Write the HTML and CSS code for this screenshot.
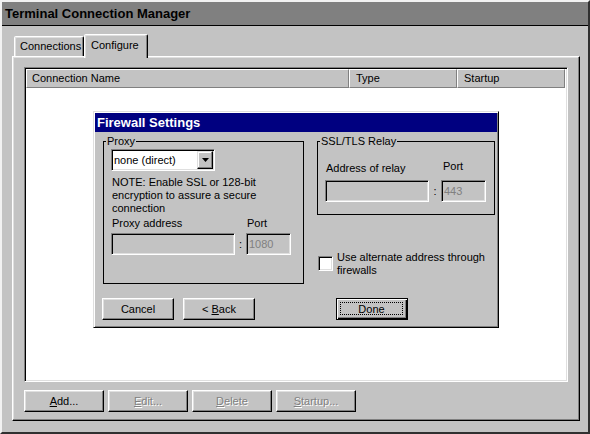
FILE: index.html
```html
<!DOCTYPE html>
<html>
<head>
<meta charset="utf-8">
<title>Terminal Connection Manager</title>
<link rel="stylesheet" href="styles.css">
</head>
<body>
<div class="window">
  <div class="titlebar">Terminal Connection Manager</div>
  <div class="client">
    <div class="tabs">
      <div class="tab tab-conn">Connections</div>
      <div class="tab tab-active">Configure</div>
    </div>
    <div class="panel">
      <div class="listview">
        <div class="lv-header">
          <div class="lv-col col-name">Connection Name</div>
          <div class="lv-col col-type">Type</div>
          <div class="lv-col col-startup">Startup</div>
        </div>
        <div class="lv-body"></div>
      </div>
      <div class="actions">
        <div class="btn btn-main"><span><u>A</u>dd...</span></div>
        <div class="btn btn-main disabled"><span><u>E</u>dit...</span></div>
        <div class="btn btn-main disabled"><span><u>D</u>elete</span></div>
        <div class="btn btn-main disabled"><span><u>S</u>tartup...</span></div>
      </div>
    </div>
  </div>
</div>

<div class="dialog">
  <div class="dlg-title">Firewall Settings</div>
  <div class="dlg-body">
    <div class="group group-proxy">
      <span class="group-label">Proxy</span>
      <div class="combo">
        <span class="combo-text">none (direct)</span>
        <span class="combo-btn"><svg width="7" height="4" viewBox="0 0 7 4"><polygon points="0,0 7,0 3.5,4" fill="#000"/></svg></span>
      </div>
      <p class="note">NOTE: Enable SSL or 128-bit<br>encryption to assure a secure<br>connection</p>
      <div class="fields fields-proxy">
        <span class="field-label">Proxy address</span>
        <span></span>
        <span class="field-label">Port</span>
        <div class="input"></div>
        <span class="colon">:</span>
        <div class="input">1080</div>
      </div>
    </div>
    <div class="right-col">
      <div class="group group-ssl">
        <span class="group-label">SSL/TLS Relay</span>
        <div class="fields fields-ssl">
          <span class="field-label">Address of relay</span>
          <span></span>
          <span class="field-label port-label">Port</span>
          <div class="input"></div>
          <span class="colon">:</span>
          <div class="input">443</div>
        </div>
      </div>
      <div class="check-row">
        <span class="checkbox"></span>
        <span class="check-text">Use alternate address through<br>firewalls</span>
      </div>
    </div>
    <div class="dlg-left">
      <div class="btn dlg-btn"><span>Cancel</span></div>
      <div class="btn dlg-btn"><span>&lt; <u>B</u>ack</span></div>
    </div>
    <div class="dlg-right">
      <div class="btn dlg-btn btn-default"><span class="focus">Done</span></div>
    </div>
  </div>
</div>
</body>
</html>
```

FILE: styles.css
```css
html, body {
  margin: 0;
  padding: 0;
}
body {
  width: 590px;
  height: 434px;
  overflow: hidden;
  position: relative;
  background: #c3c3c3;
  font-family: "Liberation Sans", Arial, sans-serif;
  font-size: 11px;
  color: #000;
}

.window {
  box-sizing: border-box;
  width: 590px;
  height: 434px;
  border: 2px solid;
  border-color: #f2f2f2 #303030 #303030 #f2f2f2;
  background: #c3c3c3;
  display: flex;
  flex-direction: column;
}

.titlebar {
  height: 23px;
  line-height: 23px;
  background: #808080;
  border-bottom: 1px solid #000;
  padding-left: 3px;
  font-weight: bold;
  font-size: 13px;
  color: #000;
}

.client {
  flex: 1;
  display: flex;
  flex-direction: column;
  padding: 8px 8px 11px 10px;
}

.tabs {
  height: 22px;
  display: flex;
  align-items: flex-end;
  padding-left: 2px;
}
.tab {
  box-sizing: border-box;
  height: 20px;
  line-height: 18px;
  border: 1px solid;
  border-bottom: none;
  border-color: #fff #000 transparent #fff;
  box-shadow: inset -1px 0 #808080, inset 1px 1px #dfdfdf;
  border-radius: 2px 2px 0 0;
  background: #c3c3c3;
  padding: 0 5px;
}
.tab-conn {
  width: 70px;
}
.tab-active {
  width: 64px;
  height: 24px;
  line-height: 21px;
  margin-bottom: -2px;
  padding-left: 6px;
  position: relative;
  z-index: 1;
}

.panel {
  flex: 1;
  display: flex;
  flex-direction: column;
  gap: 8px;
  border: 1px solid;
  border-color: #fff #000 #000 #fff;
  box-shadow: inset -1px -1px #808080, inset 1px 1px #dfdfdf;
  padding: 10px 11px 8px 11px;
}

.listview {
  flex: 1;
  display: flex;
  flex-direction: column;
  border: 1px solid;
  border-color: #808080 #fff #fff #808080;
  box-shadow: inset 1px 1px #000, inset -1px -1px #dfdfdf;
  background: #fff;
  padding: 1px;
}
.lv-header {
  display: flex;
  height: 19px;
}
.lv-col {
  box-sizing: border-box;
  border: 1px solid;
  border-color: #fff #808080 #808080 #fff;
  background: #c3c3c3;
  line-height: 17px;
  padding-left: 5px;
}
.col-name { width: 323px; }
.col-type { width: 108px; padding-left: 6px; }
.col-startup { width: 108px; padding-left: 6px; }
.lv-body { flex: 1; }

.actions {
  display: flex;
  gap: 4px;
  height: 22px;
}

.btn {
  box-sizing: border-box;
  border: 1px solid;
  border-color: #fff #000 #000 #fff;
  box-shadow: inset -1px -1px #808080, inset 1px 1px #dfdfdf;
  background: #c3c3c3;
  display: flex;
  align-items: center;
  justify-content: center;
  height: 22px;
}
.btn-main {
  width: 80px;
}
.btn.disabled {
  color: #808080;
  text-shadow: 1px 1px #fff;
}

.dialog {
  position: absolute;
  left: 93px;
  top: 111px;
  width: 406px;
  height: 217px;
  box-sizing: border-box;
  border: 1px solid;
  border-color: #dfdfdf #000 #000 #dfdfdf;
  box-shadow: inset 1px 1px #fff, inset -1px -1px #808080;
  padding: 1px;
  background: #c3c3c3;
}
.dlg-title {
  height: 19px;
  line-height: 19px;
  background: #000080;
  color: #fff;
  font-weight: bold;
  font-size: 13px;
  padding-left: 2px;
}
.dlg-body {
  display: grid;
  grid-template-columns: 201px 178px;
  column-gap: 13px;
  row-gap: 14px;
  padding: 9px 0 0 8px;
}

.group {
  position: relative;
  box-sizing: border-box;
  border: 1px solid #000;
}
.group-label {
  position: absolute;
  top: -7px;
  left: 2px;
  padding: 0 1px;
  line-height: 13px;
  background: #c3c3c3;
}
.group-proxy {
  height: 143px;
  padding: 7px 0 0 7px;
}
.group-ssl {
  height: 74px;
  padding: 20px 0 0 7px;
}

.combo {
  box-sizing: border-box;
  width: 104px;
  height: 22px;
  border: 1px solid;
  border-color: #808080 #fff #fff #808080;
  box-shadow: inset 1px 1px #000, inset -1px -1px #dfdfdf;
  background: #fff;
  padding: 1px;
  display: flex;
  align-items: center;
}
.combo-text {
  flex: 1;
  padding-left: 1px;
  line-height: 18px;
}
.combo-btn {
  box-sizing: border-box;
  width: 16px;
  height: 18px;
  border: 1px solid;
  border-color: #dfdfdf #000 #000 #dfdfdf;
  box-shadow: inset -1px -1px #808080, inset 1px 1px #fff;
  background: #c3c3c3;
  display: flex;
  align-items: center;
  justify-content: center;
}
.combo-btn svg {
  display: block;
}

.note {
  margin: 5px 0 0 1px;
  line-height: 13px;
}

.fields {
  display: grid;
  grid-template-rows: 13px 22px;
  row-gap: 3px;
}
.fields-proxy {
  grid-template-columns: 124px 11px 45px;
  margin-top: 2px;
}
.fields-ssl {
  grid-template-columns: 104px 12px 45px;
  row-gap: 5px;
}
.field-label {
  line-height: 13px;
  padding-left: 1px;
}
.port-label {
  padding-left: 2px;
  position: relative;
  top: -2px;
}
.input {
  box-sizing: border-box;
  height: 22px;
  border: 1px solid;
  border-color: #808080 #fff #fff #808080;
  box-shadow: inset 1px 1px #000, inset -1px -1px #dfdfdf;
  background: #c3c3c3;
  color: #808080;
  padding-left: 2px;
  line-height: 20px;
}
.colon {
  line-height: 22px;
  text-align: center;
}

.check-row {
  display: flex;
  align-items: flex-start;
  gap: 4px;
  margin: 36px 0 0 1px;
}
.checkbox {
  box-sizing: border-box;
  width: 15px;
  height: 15px;
  margin-top: 5px;
  border: 1px solid;
  border-color: #808080 #fff #fff #808080;
  box-shadow: inset 1px 1px #000, inset -1px -1px #dfdfdf;
  background: #fff;
  flex: none;
}
.check-text {
  line-height: 13px;
}

.dlg-left {
  display: flex;
  gap: 9px;
  margin-left: -1px;
}
.dlg-right {
  padding-left: 19px;
}
.dlg-btn {
  width: 72px;
}
.btn-default {
  border: 1px solid #000;
  box-shadow: inset 1px 1px #fff, inset -1px -1px #000, inset -2px -2px #808080;
  padding: 3px 4px 4px 3px;
  align-items: stretch;
}
.focus {
  flex: 1;
  border: 1px dotted #000;
  display: flex;
  align-items: center;
  justify-content: center;
}
```
